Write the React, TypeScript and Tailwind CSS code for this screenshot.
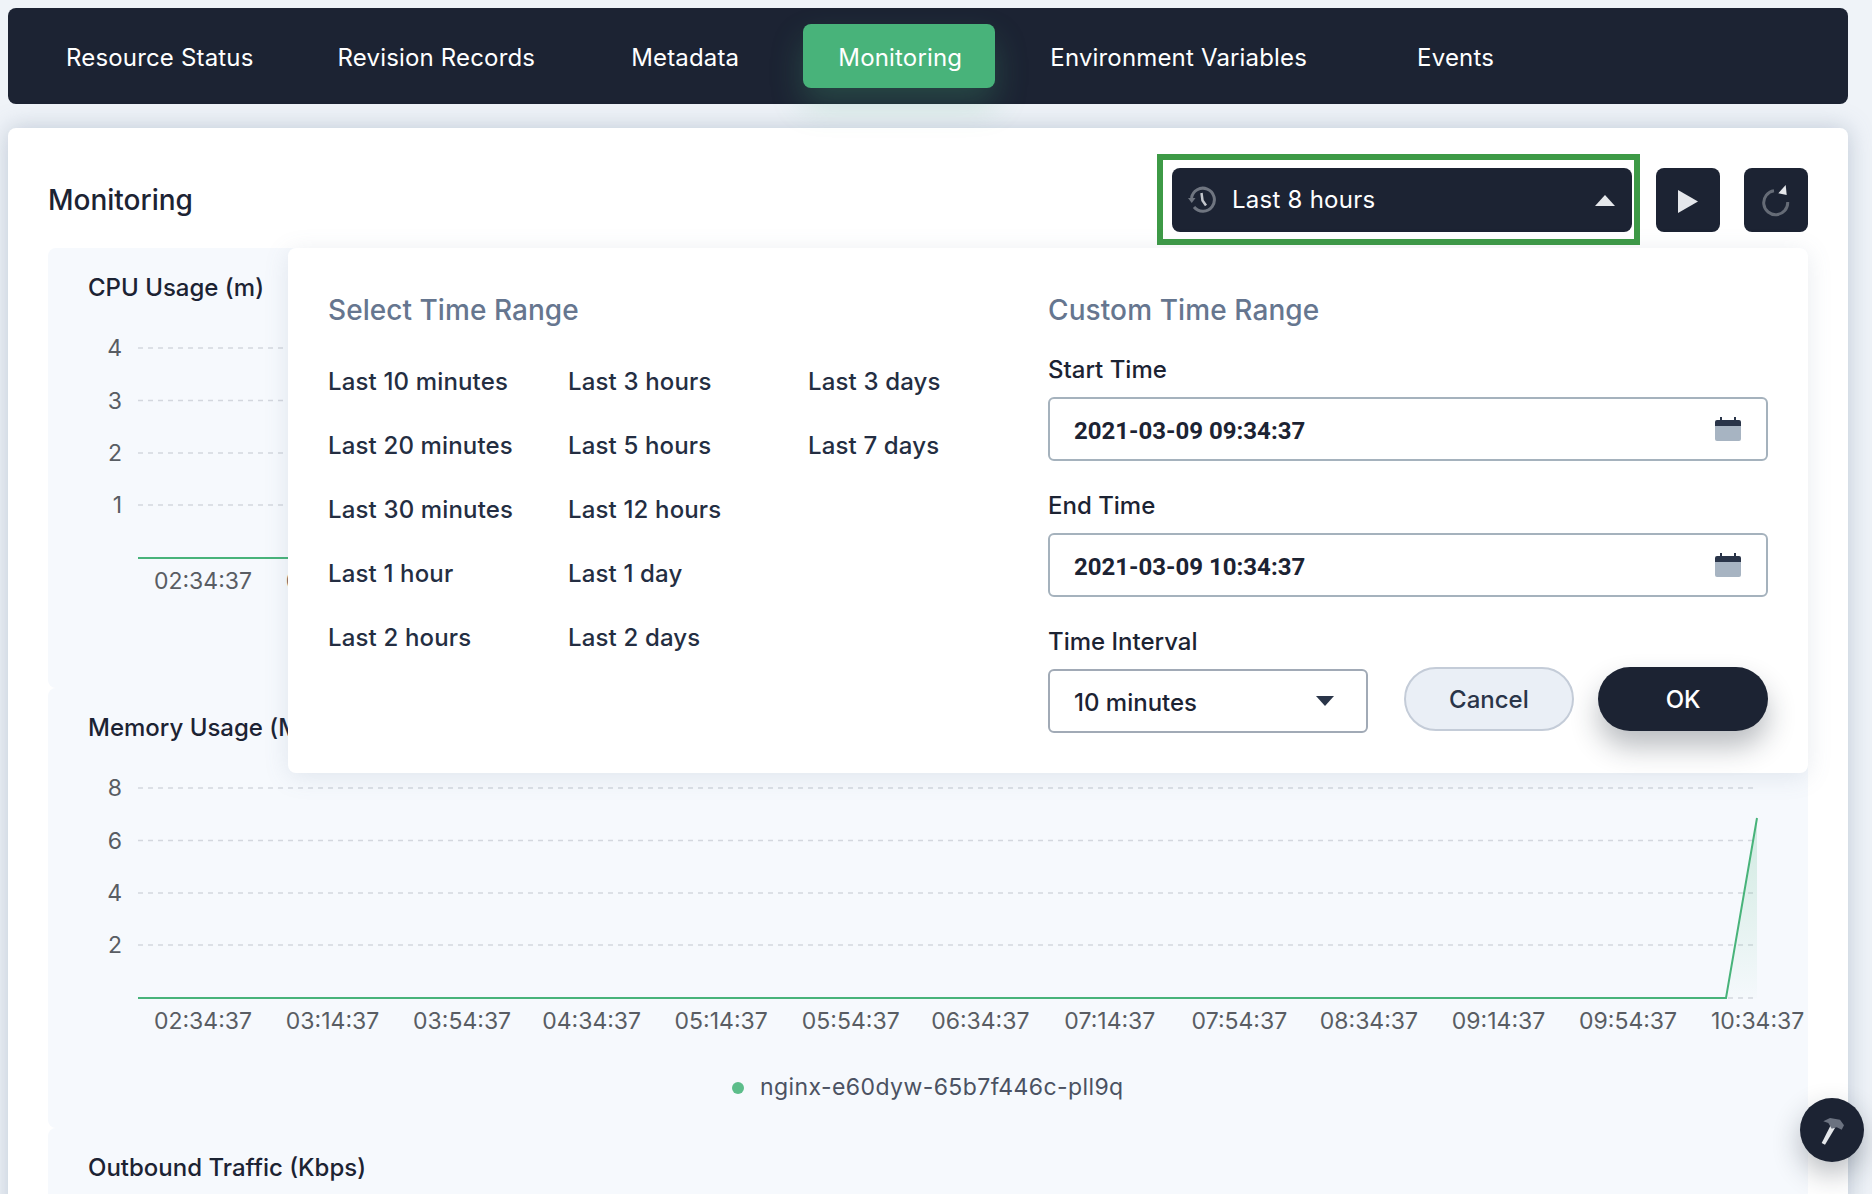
import React from "react";

const F = { fontFamily: "Inter, 'Noto Sans', sans-serif" };

const tabs = [
  { t: "Resource Status", c: "ml-[58px]" },
  { t: "Revision Records", c: "ml-[84px]" },
  { t: "Metadata", c: "ml-[96px]" },
];

const xLabels = ["02:34:37","03:14:37","03:54:37","04:34:37","05:14:37","05:54:37","06:34:37","07:14:37","07:54:37","08:34:37","09:14:37","09:54:37","10:34:37"];

function Chart({ ticks, spike }: { ticks: string[]; spike?: boolean }) {
  const ys = [20, 72.5, 125, 177];
  return (
    <svg width="1760" height="360" className="block" style={F}>
      <defs>
        <linearGradient id="fillg" x1="0" y1="0" x2="0" y2="1">
          <stop offset="0" stopColor="#48b37a" stopOpacity="0.22" />
          <stop offset="1" stopColor="#48b37a" stopOpacity="0.01" />
        </linearGradient>
      </defs>
      {ticks.map((t, i) => (
        <g key={t}>
          <line x1="90" x2="1706" y1={ys[i]} y2={ys[i]} stroke="#d3d7de" strokeWidth="1.5" strokeDasharray="5 5" />
          <text x="74" y={ys[i] + 8} textAnchor="end" fontSize="23" fill="#595d63">{t}</text>
        </g>
      ))}
      <line x1="1680" x2="1706" y1="230" y2="230" stroke="#d3d7de" strokeWidth="1.5" strokeDasharray="5 5" />
      {spike ? <path d="M1678 230 L1709 50 L1709 230 Z" fill="url(#fillg)" /> : null}
      <path d={spike ? "M90 230 H1678 L1709 50" : "M90 230 H1709"} fill="none" stroke="#48b37a" strokeWidth="2" />
      {xLabels.map((l, i) => (
        <text key={l} x={155 + i * 129.55} y="261" textAnchor="middle" fontSize="23" fill="#595d63">{l}</text>
      ))}
      <circle cx="690" cy="320" r="6" fill="#5cbd8a" />
      <text x="712" y="327" fontSize="23" letterSpacing="0.42" fill="#4b5262">nginx-e60dyw-65b7f446c-pll9q</text>
    </svg>
  );
}

function Panel({ title, ticks, spike, plain }: { title: string; ticks: string[]; spike?: boolean; plain?: boolean }) {
  return (
    <section className="h-[440px] shrink-0 rounded-lg bg-[#f6f9fd]">
      <h3 className="h-[80px] pl-[40px] pt-[24px] text-[24px] leading-[32px] font-medium text-[#1c2333]">{title}</h3>
      {plain ? null : <Chart ticks={ticks} spike={spike} />}
    </section>
  );
}

function CalendarIcon() {
  return (
    <svg width="28" height="24" viewBox="0 0 28 24">
      <path d="M1 7h26v15a2 2 0 0 1-2 2H3a2 2 0 0 1-2-2z" fill="#a7b4c2" />
      <path d="M1 9V5a2 2 0 0 1 2-2h3V0h2v3h12V0h2v3h3a2 2 0 0 1 2 2v4z" fill="#2a3549" />
    </svg>
  );
}

function DateField({ label, value, mt }: { label: string; value: string; mt: string }) {
  return (
    <div className={mt}>
      <div className="h-[32px] text-[24px] leading-[32px] font-medium text-[#1c2333]">{label}</div>
      <div className="mt-[11px] flex h-[64px] items-center justify-between rounded-[6px] border-2 border-[#a5b2bd] pl-[24px] pr-[24px]">
        <span className="pt-[4px] font-['Roboto'] text-[24px] font-bold text-[#1c2333]">{value}</span>
        <CalendarIcon />
      </div>
    </div>
  );
}

const col1 = ["Last 10 minutes", "Last 20 minutes", "Last 30 minutes", "Last 1 hour", "Last 2 hours"];
const col2 = ["Last 3 hours", "Last 5 hours", "Last 12 hours", "Last 1 day", "Last 2 days"];
const col3 = ["Last 3 days", "Last 7 days"];

function Col({ items, w }: { items: string[]; w: string }) {
  return (
    <ul className={`${w} flex flex-col`}>
      {items.map((i) => (
        <li key={i} className="flex h-[64px] items-center text-[24px] font-medium tracking-[0.15px] text-[#242e42]">{i}</li>
      ))}
    </ul>
  );
}

export default function App() {
  return (
    <div className="relative h-[1194px] w-[1872px] overflow-hidden bg-[#eff3f8] py-[8px] pl-[8px] pr-[24px]" style={F}>
      <nav className="flex h-[96px] items-center rounded-lg bg-[#1c2333] text-[24px] tracking-[0.17px] text-white">
        {tabs.map((x) => (
          <span key={x.t} className={`${x.c} pt-[4px]`}>{x.t}</span>
        ))}
        <span className="ml-[64px] flex h-[64px] w-[192px] items-center justify-center rounded-lg bg-[#48b37a] pl-[2px] pt-[4px] shadow-[0_16px_32px_rgba(72,179,122,0.25)]">Monitoring</span>
        <span className="ml-[55px] pt-[4px]">Environment Variables</span>
        <span className="ml-[110px] pt-[4px]">Events</span>
      </nav>

      <main className="mt-[24px] h-[1100px] overflow-hidden rounded-lg bg-white shadow-[0_0_24px_rgba(100,120,150,0.35)]">
        <header className="flex h-[120px] items-start px-[40px] pt-[26px]">
          <h2 className="mt-[30px] text-[28px] leading-[32px] font-medium text-[#1c2333]">Monitoring</h2>
          <div className="ml-auto flex items-center">
            <div className="border-[6px] border-[#3d9a46] pb-[7px] pl-[9px] pr-[2px] pt-[8px]">
              <div className="flex h-[64px] w-[460px] items-center rounded-lg bg-[#1c2333] pl-[16px] pr-[17px] text-[24px] tracking-[0.25px] text-white">
                <svg width="28" height="28" viewBox="0 0 28 28" fill="none">
                  <path d="M3.5 12A11.5 11.5 0 1 1 6 21" stroke="#6f7580" strokeWidth="3" />
                  <path d="M0 12h7.5l-3.75 5z" fill="#6f7580" />
                  <path d="M13.5 7l1 7.5 3.5 5" stroke="#c2c5cb" strokeWidth="2.5" />
                </svg>
                <span className="ml-[16px]">Last 8 hours</span>
                <svg width="20" height="11" viewBox="0 0 20 11" className="ml-auto"><path d="M10 0l10 11H0z" fill="#e5e7eb" /></svg>
              </div>
            </div>
            <button className="ml-[16px] flex size-[64px] items-center justify-center rounded-lg bg-[#1c2333]">
              <svg width="20" height="23" viewBox="0 0 20 23" className="mt-[3px]"><path d="M0 0l20 11.5L0 23z" fill="#e5e7eb" /></svg>
            </button>
            <button className="ml-[24px] size-[64px] rounded-lg bg-[#1c2333]">
              <svg width="64" height="64" viewBox="0 0 64 64" fill="none" className="block">
                <path d="M30 22.8A12 12 0 1 0 43.7 34" stroke="#656b76" strokeWidth="3" />
                <path d="M41.7 17L42.7 27 34.3 25.3z" fill="#e5e7eb" />
              </svg>
            </button>
          </div>
        </header>
        <div className="mx-[40px] flex flex-col">
          <Panel title="CPU Usage (m)" ticks={["4", "3", "2", "1"]} />
          <Panel title="Memory Usage (Mi)" ticks={["8", "6", "4", "2"]} spike />
          <Panel title="Outbound Traffic (Kbps)" ticks={[]} plain />
        </div>
      </main>

      <div className="absolute left-[288px] top-[248px] flex h-[525px] w-[1520px] rounded-lg bg-white pl-[40px] shadow-[0_4px_24px_rgba(100,120,150,0.15)]">
        <div className="w-[720px] pt-[44px]">
          <h3 className="h-[36px] text-[28px] leading-[36px] font-medium tracking-[0.05px] text-[#66768f]">Select Time Range</h3>
          <div className="mt-[22px] flex">
            <Col items={col1} w="w-[240px]" />
            <Col items={col2} w="w-[240px]" />
            <Col items={col3} w="w-[240px]" />
          </div>
        </div>
        <div className="w-[720px] pt-[44px]">
          <h3 className="h-[36px] text-[28px] leading-[36px] font-medium tracking-[0.1px] text-[#66768f]">Custom Time Range</h3>
          <DateField label="Start Time" value="2021-03-09 09:34:37" mt="mt-[26px]" />
          <DateField label="End Time" value="2021-03-09 10:34:37" mt="mt-[29px]" />
          <div className="mt-[29px]">
            <div className="h-[32px] text-[24px] leading-[32px] font-medium text-[#1c2333]">Time Interval</div>
            <div className="mt-[9px] flex items-start">
              <div className="mt-[2px] flex h-[64px] w-[320px] items-center justify-between rounded-[6px] border-2 border-[#a1aab6] pl-[24px] pr-[32px] text-[24px] font-medium text-[#1c2333]">
                <span className="pt-[4px]">10 minutes</span>
                <svg width="18" height="10" viewBox="0 0 18 10"><path d="M0 0h18L9 10z" fill="#2a3549" /></svg>
              </div>
              <button className="ml-[36px] h-[64px] w-[171px] rounded-full border-2 border-[#c4ccd8] bg-[#eaeff6] pt-[2px] text-[24px] font-medium text-[#2a3549]">Cancel</button>
              <button className="ml-[24px] h-[64px] w-[170px] rounded-full bg-[#1c2333] pt-[2px] text-[24px] font-medium text-white shadow-[0_16px_28px_rgba(28,35,51,0.3)]">OK</button>
            </div>
          </div>
        </div>
      </div>

      <button className="absolute left-[1800px] top-[1098px] size-[64px] rounded-full bg-[#1c2333] shadow-[0_12px_28px_rgba(28,35,51,0.3)]">
        <svg width="64" height="64" viewBox="0 0 64 64" className="block">
          <path d="M21.7 45L25 46.7 35 30 30.7 27.3z" fill="#e5e7eb" />
          <path d="M23.3 23.3L30 20 40 21.7 44 27.3 41.7 31.7 36.7 29.3 31.7 30.7 28.3 25z" fill="#6b7280" />
        </svg>
      </button>
    </div>
  );
}
